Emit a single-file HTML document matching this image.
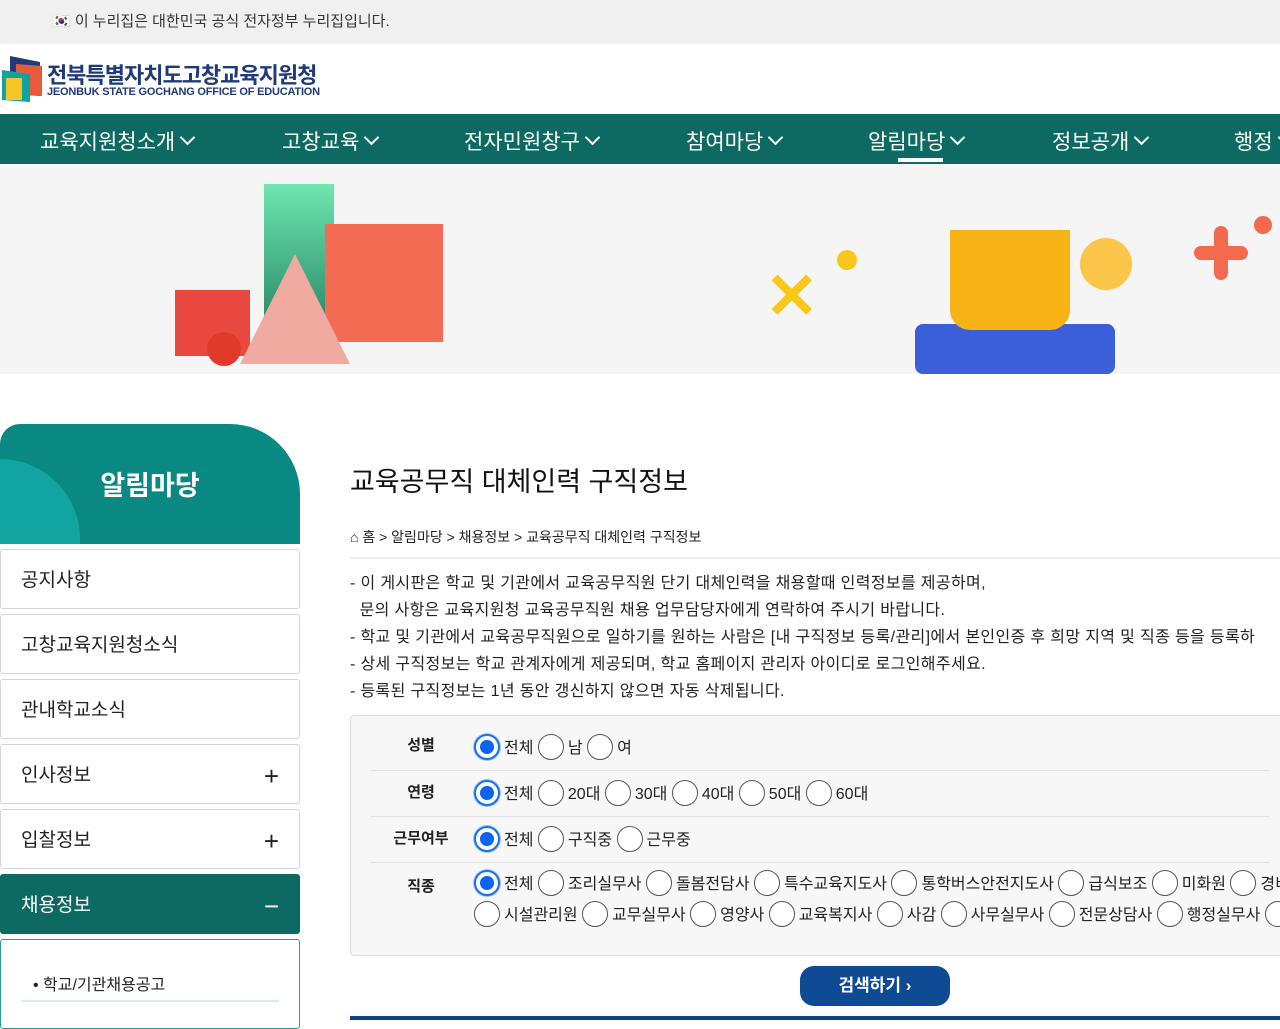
<!DOCTYPE html>
<html><head><meta charset="utf-8"><style>
*{box-sizing:border-box;margin:0;padding:0}
body{width:1280px;height:1024px;overflow:hidden;background:#fff;font-family:"Liberation Sans","Noto Sans CJK KR",sans-serif;color:#222}
.top{height:44px;background:#f0f0f0;font-size:15px;line-height:44px;padding-left:52px;color:#333}
.hdr{height:70px;position:relative}
.nav{height:50px;background:#0d6a62;position:relative;color:#fff;font-size:21px}
.nav span{position:absolute;top:12px;white-space:nowrap}
.nav span:after{content:"";display:inline-block;width:9px;height:9px;border-right:2px solid #fff;border-bottom:2px solid #fff;transform:rotate(45deg);margin-left:7px;vertical-align:6px}
.banner{height:210px;background:#f5f5f5;position:relative;overflow:hidden}
.side{position:absolute;left:0;top:424px;width:300px}
.stitle{height:120px;background:#0a8983;border-top-right-radius:70px;border-top-left-radius:20px;position:relative;overflow:hidden;color:#fff;font-size:27px;font-weight:bold;text-align:center;line-height:124px}
.mi{height:60px;border:1px solid #d5d5d5;border-radius:3px;margin-top:5px;font-size:19px;line-height:62px;padding-left:20px;position:relative;color:#222}
.mi b{position:absolute;right:20px;top:0;font-weight:normal;font-size:26px}
.main{position:absolute;left:350px;top:424px;width:930px}
h1{font-size:27px;font-weight:normal;margin-top:36px;color:#111}
.bc{font-size:14px;margin-top:28px;padding-bottom:10px;border-bottom:2px solid #eee}
.desc{font-size:16px;line-height:27px;margin-top:11px;white-space:nowrap;letter-spacing:0.35px}
.box{margin-top:10px;border:1px solid #ddd;border-radius:4px;background:#f7f7f7;height:241px;width:940px;padding:0 20px}
.row{display:flex;border-bottom:1px solid #e2e2e2;font-size:16px}
.row .l{width:100px;flex-shrink:0;text-align:center;font-weight:bold;padding-top:18px;font-size:15px}
.row .o{padding-top:17px;white-space:nowrap;line-height:31px;padding-left:3px}
.r{display:inline-block;width:26px;height:26px;border:1px solid #555;border-radius:50%;background:#fff;vertical-align:middle;margin:0 4px 0 0;position:relative;top:-2px}
.r.on{border:2px solid #1a73e8;box-shadow:0 0 0 1px #9cc3f5}
.r.on:after{content:"";position:absolute;left:4px;top:4px;width:14px;height:14px;border-radius:50%;background:#0b64f0}
.btn{position:absolute;left:450px;top:542px;width:150px;height:40px;border-radius:14px;background:#0f4a94;color:#fff;font-weight:bold;text-align:center;line-height:40px;font-size:17px}
</style></head><body>
<div class="top">🇰🇷 이 누리집은 대한민국 공식 전자정부 누리집입니다.</div>
<div class="hdr">
<svg style="position:absolute;left:2px;top:12px" width="40" height="46"><polygon points="8,0 38,6 38,40 8,38" fill="#1f3a78"/><polygon points="14,8 40,10 40,40 14,38" fill="#e85a3c"/><polygon points="0,14 28,18 28,46 0,44" fill="#12a3a0"/><rect x="4" y="22" width="16" height="22" fill="#f3c623"/></svg>
<div style="position:absolute;left:47px;top:14px;font-size:22px;font-weight:bold;color:#1f3a78;letter-spacing:-1px">전북특별자치도고창교육지원청</div>
<div style="position:absolute;left:47px;top:42px;font-size:11px;font-weight:bold;color:#1f3a78;letter-spacing:-0.2px">JEONBUK STATE GOCHANG OFFICE OF EDUCATION</div>
</div>
<div class="nav"><span style="left:40px">교육지원청소개</span><span style="left:282px">고창교육</span><span style="left:464px">전자민원창구</span><span style="left:686px">참여마당</span><span style="left:868px">알림마당</span><span style="left:1052px">정보공개</span><span style="left:1234px">행정</span><div style="position:absolute;left:898px;top:44px;width:45px;height:4px;background:#fff"></div></div>
<div class="banner">
<div style="position:absolute;left:264px;top:20px;width:70px;height:140px;background:linear-gradient(#6fe6b0,#2a8a6a)"></div>
<div style="position:absolute;left:325px;top:60px;width:118px;height:118px;background:#f26b52"></div>
<div style="position:absolute;left:175px;top:126px;width:75px;height:66px;background:#e8483e"></div>
<div style="position:absolute;left:240px;top:90px;width:0;height:0;border-left:55px solid transparent;border-right:55px solid transparent;border-bottom:110px solid #f0aaa0"></div>
<div style="position:absolute;left:207px;top:168px;width:34px;height:34px;border-radius:50%;background:#e23a2a"></div>
<div style="position:absolute;left:765px;top:100px;font-size:64px;font-weight:bold;color:#f8c71a;line-height:1">✕</div>
<div style="position:absolute;left:837px;top:86px;width:20px;height:20px;border-radius:50%;background:#f8c71a"></div>
<div style="position:absolute;left:915px;top:160px;width:200px;height:50px;background:#3a5fd8;border-radius:8px"></div>
<div style="position:absolute;left:950px;top:66px;width:120px;height:100px;background:#f7b315;border-radius:0 0 20px 20px"></div>
<div style="position:absolute;left:1080px;top:74px;width:52px;height:52px;border-radius:50%;background:#fcc64a"></div>
<div style="position:absolute;left:1194px;top:82px;width:54px;height:14px;background:#f46a4e;border-radius:7px"></div>
<div style="position:absolute;left:1214px;top:62px;width:14px;height:54px;background:#f46a4e;border-radius:7px"></div>
<div style="position:absolute;left:1254px;top:52px;width:18px;height:18px;border-radius:50%;background:#f46a4e"></div>
</div>
<div class="side">
<div class="stitle"><div style="position:absolute;left:-80px;top:35px;width:160px;height:160px;border-radius:50%;background:#12a4a0"></div><span style="position:relative">알림마당</span></div>
<div class="mi">공지사항</div>
<div class="mi">고창교육지원청소식</div>
<div class="mi">관내학교소식</div>
<div class="mi">인사정보<b>+</b></div>
<div class="mi">입찰정보<b>+</b></div>
<div class="mi" style="background:#0d6a62;color:#fff;border-color:#0d6a62">채용정보<b>−</b></div>
<div class="mi" style="height:90px;border-color:#2a9a94;padding:32px 20px 0"><div style="font-size:16px;line-height:28px;border-bottom:2px solid #d8eeec;padding-left:12px">• 학교/기관채용공고</div></div>
</div>
<div class="main">
<h1>교육공무직 대체인력 구직정보</h1>
<div class="bc">⌂ 홈 &gt; 알림마당 &gt; 채용정보 &gt; 교육공무직 대체인력 구직정보</div>
<div class="desc">- 이 게시판은 학교 및 기관에서 교육공무직원 단기 대체인력을 채용할때 인력정보를 제공하며,<br>&nbsp;&nbsp;문의 사항은 교육지원청 교육공무직원 채용 업무담당자에게 연락하여 주시기 바랍니다.<br>- 학교 및 기관에서 교육공무직원으로 일하기를 원하는 사람은 [내 구직정보 등록/관리]에서 본인인증 후 희망 지역 및 직종 등을 등록하<br>- 상세 구직정보는 학교 관계자에게 제공되며, 학교 홈페이지 관리자 아이디로 로그인해주세요.<br>- 등록된 구직정보는 1년 동안 갱신하지 않으면 자동 삭제됩니다.</div>
<div class="box">
<div class="row" style="height:55px"><div class="l">성별</div><div class="o"><i class="r on"></i>전체 <i class="r"></i>남 <i class="r"></i>여</div></div>
<div class="row" style="height:46px"><div class="l" style="padding-top:10px">연령</div><div class="o" style="padding-top:8px"><i class="r on"></i>전체 <i class="r"></i>20대 <i class="r"></i>30대 <i class="r"></i>40대 <i class="r"></i>50대 <i class="r"></i>60대</div></div>
<div class="row" style="height:46px"><div class="l" style="padding-top:10px">근무여부</div><div class="o" style="padding-top:8px"><i class="r on"></i>전체 <i class="r"></i>구직중 <i class="r"></i>근무중</div></div>
<div class="row" style="border:0"><div class="l" style="padding-top:12px">직종</div><div class="o" style="padding-top:6px"><i class="r on"></i>전체 <i class="r"></i>조리실무사 <i class="r"></i>돌봄전담사 <i class="r"></i>특수교육지도사 <i class="r"></i>통학버스안전지도사 <i class="r"></i>급식보조 <i class="r"></i>미화원 <i class="r"></i>경비원<br><i class="r"></i>시설관리원 <i class="r"></i>교무실무사 <i class="r"></i>영양사 <i class="r"></i>교육복지사 <i class="r"></i>사감 <i class="r"></i>사무실무사 <i class="r"></i>전문상담사 <i class="r"></i>행정실무사 <i class="r"></i></div></div>
</div>
<div class="btn">검색하기 ›</div>
<div style="position:absolute;left:0;top:592px;width:930px;height:4px;background:#0f3f86"></div>
</div>
</body></html>
